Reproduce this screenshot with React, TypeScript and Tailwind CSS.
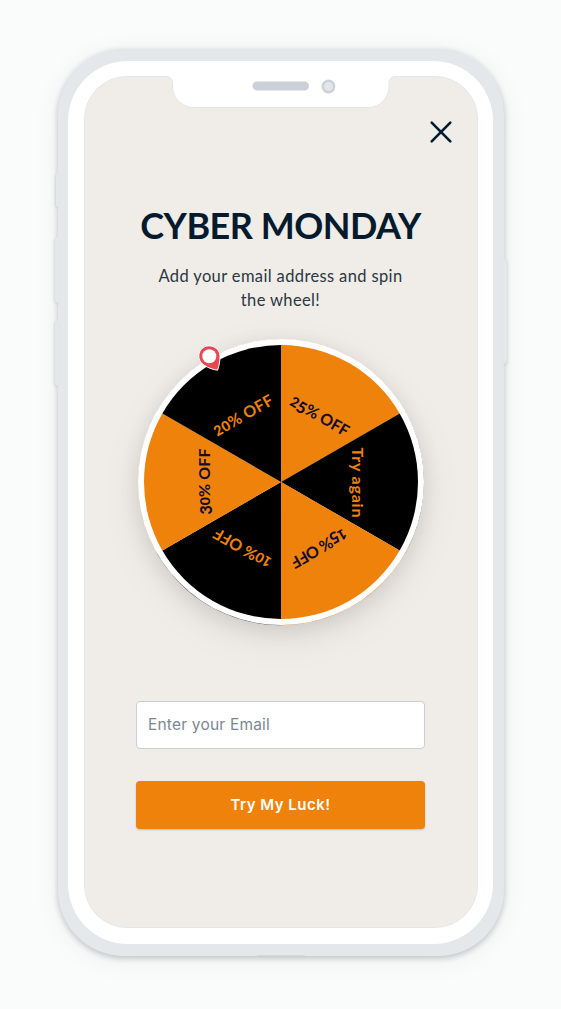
import React from 'react';

type Slice = { label: string; angle: number; fill: string; text: string; length: number };

const ORANGE = '#ee820a';
const INK = '#140b2e';
const SECTOR = 'M0 0 L-68.5 -118.65 A137 137 0 0 1 68.5 -118.65 Z';

const slices: Slice[] = [
  { label: '25% OFF', angle: 30, fill: ORANGE, text: INK, length: 65 },
  { label: 'Try again', angle: 90, fill: '#000000', text: ORANGE, length: 70 },
  { label: '15% OFF', angle: 150, fill: ORANGE, text: INK, length: 62 },
  { label: '10% OFF', angle: 210, fill: '#000000', text: ORANGE, length: 64 },
  { label: '30% OFF', angle: 270, fill: ORANGE, text: INK, length: 66 },
  { label: '20% OFF', angle: 330, fill: '#000000', text: ORANGE, length: 66 },
];

// Old-style figures: 0-2 sit at x-height, 3-9 drop below the baseline.
function OldStyle({ label }: { label: string }) {
  let shift = 0;
  return (
    <>
      {[...label].map((ch, i) => {
        const small = /[0-2]/.test(ch);
        const low = /[3-9]/.test(ch);
        const target = low ? 2 : 0;
        const dy = target - shift;
        shift = target;
        return (
          <tspan key={i} dy={dy} fontSize={small ? 14 : 16} fontWeight={small || low ? 900 : 700}>
            {ch}
          </tspan>
        );
      })}
    </>
  );
}

function Wheel() {
  return (
    <div className="relative size-[286px] shrink-0 rounded-full shadow-[0_5px_20px_rgba(0,0,0,0.09),0_12px_40px_rgba(0,0,0,0.08)]">
      <svg viewBox="-143 -143 286 286" className="block size-full overflow-visible">
        <g transform="translate(0 0.4) scale(1.0425)" opacity="0.75">
          {slices.map((s) => (
            <path key={s.label} d={SECTOR} transform={`rotate(${s.angle})`} fill={s.fill} />
          ))}
        </g>
        <circle r="143" fill="#ffffff" />
        {slices.map((s) => (
          <path key={s.label} d={SECTOR} transform={`rotate(${s.angle})`} fill={s.fill} />
        ))}
        {slices.map((s) => (
          <text
            key={s.label}
            transform={`rotate(${s.angle})`}
            x="0.5"
            y="-71"
            textAnchor="middle"
            textLength={s.length}
            fill={s.text}
            fontSize="16"
            className="font-['Lato',sans-serif] font-bold"
          >
            {/\d/.test(s.label) ? <OldStyle label={s.label} /> : s.label}
          </text>
        ))}
      </svg>
      <svg viewBox="0 0 30 32" className="absolute left-[57px] top-[3px] h-8 w-[30px]">
        <path
          d="M14 3.8 C20 3.8 25 8.3 25 14.2 C25 19 24.3 23 22.6 28.2 C18.5 27.7 13.5 26.2 9 23.2 C5.5 21 3.8 17.5 3.8 14 C3.8 8.3 8.4 3.8 14 3.8 Z"
          fill="#e8484f"
          stroke="#fff"
          strokeWidth="1"
        />
        <circle cx="14.3" cy="14.2" r="7" fill="#fff" />
      </svg>
    </div>
  );
}

function Notch() {
  return (
    <svg viewBox="0 0 234 34" className="absolute left-[79px] top-[-2px] h-[34px] w-[234px]">
      <path d="M0 0 H234 V1.5 H232 C227.500 1.5 225 4 225 8 V11 C225 23 216 32.5 204 32.5 H30 C18 32.5 8.500 23 8.500 11 V8 C8.500 4 6 1.5 2 1.5 H0 Z" fill="#fff" />
      <path d="M0 1.5 H2 C6 1.5 8.500 4 8.500 8 V11 C8.500 23 18 32.5 30 32.5 H204 C216 32.5 225 23 225 11 V8 C225 4 227.500 1.5 232 1.5 H234" fill="none" stroke="#e4e7ea" />
      <rect x="88.500" y="6.5" width="56.5" height="9" rx="4.5" fill="#cbd0d9" />
      <circle cx="164.500" cy="11.5" r="5.7" fill="#e2e6e9" stroke="#cbd0d9" strokeWidth="2.4" />
    </svg>
  );
}

export default function App() {
  return (
    <main className="flex h-[1009px] w-[561px] justify-center overflow-hidden bg-[#fafcfb] pt-[49px]">
      <div className="relative h-[907px] w-[446px] shrink-0 rounded-[66px] bg-[#e4e8eb] px-[10.5px] py-3 shadow-[0_2px_6px_rgba(0,0,0,0.22),0_4px_30px_rgba(0,0,0,0.05)]">
        <i className="absolute left-[-2px] top-[124px] h-[34px] w-[3px] rounded-l-sm bg-[#e4e8eb] shadow-[-1px_1px_3px_rgba(0,0,0,0.1)]" />
        <i className="absolute left-[-3px] top-[188px] h-[66px] w-1 rounded-l-sm bg-[#e4e8eb] shadow-[-1px_1px_3px_rgba(0,0,0,0.1)]" />
        <i className="absolute left-[-3px] top-[271px] h-[66px] w-1 rounded-l-sm bg-[#e4e8eb] shadow-[-1px_1px_3px_rgba(0,0,0,0.1)]" />
        <i className="absolute right-[-3px] top-[210px] h-[105px] w-1 rounded-r-sm bg-[#e4e8eb] shadow-[1px_1px_3px_rgba(0,0,0,0.1)]" />
        <i className="absolute bottom-0 left-[199px] h-px w-12 rounded-full bg-[#d6d9dc]" />
        <div className="relative size-full rounded-[60px] bg-white px-[15.5px] pb-4 pt-[15px]">
          <div className="relative flex h-[852px] w-[394px] flex-col items-center rounded-[43px] border border-[#e4e7ea] bg-[#f0ede8]">
            <Notch />
            <div className="flex h-[67px] w-full shrink-0 items-end justify-end pr-6">
              <button aria-label="Close" className="block size-6">
                <svg viewBox="0 0 24 24" className="size-6" stroke="#041b2d" strokeWidth="2.6" strokeLinecap="round">
                  <path d="M2.7 2.7 L21.3 21.3 M21.3 2.7 L2.7 21.3" />
                </svg>
              </button>
            </div>
            <h1 className="mt-[59px] whitespace-nowrap font-['Lato',sans-serif] text-[36px] font-bold leading-[44px] tracking-[-0.5px] text-[#041b2d]">
              CYBER MONDAY
            </h1>
            <p className="mt-[17px] text-center font-['Lato',sans-serif] text-[16.5px] leading-6 tracking-[0.37px] text-[#2b3743]">
              Add your email address and spin
              <br />
              the wheel!
            </p>
            <div className="mt-[27px] flex">
              <Wheel />
            </div>
            <input
              placeholder="Enter your Email"
              className="mt-[76px] h-12 w-[289px] shrink-0 rounded-[4px] border border-[#c9ced7] bg-white px-[11px] pb-0.5 font-['Inter',sans-serif] text-[15.5px] tracking-[0.2px] text-[#041b2d] outline-none placeholder:text-[#7c8793]"
            />
            <button className="mt-8 h-12 w-[289px] shrink-0 rounded-[4px] bg-[#ee820a] font-['Inter',sans-serif] text-[15px] font-semibold tracking-[0.5px] text-white shadow-[0_1px_2px_rgba(0,0,0,0.2)]">
              Try My Luck!
            </button>
          </div>
        </div>
      </div>
    </main>
  );
}
